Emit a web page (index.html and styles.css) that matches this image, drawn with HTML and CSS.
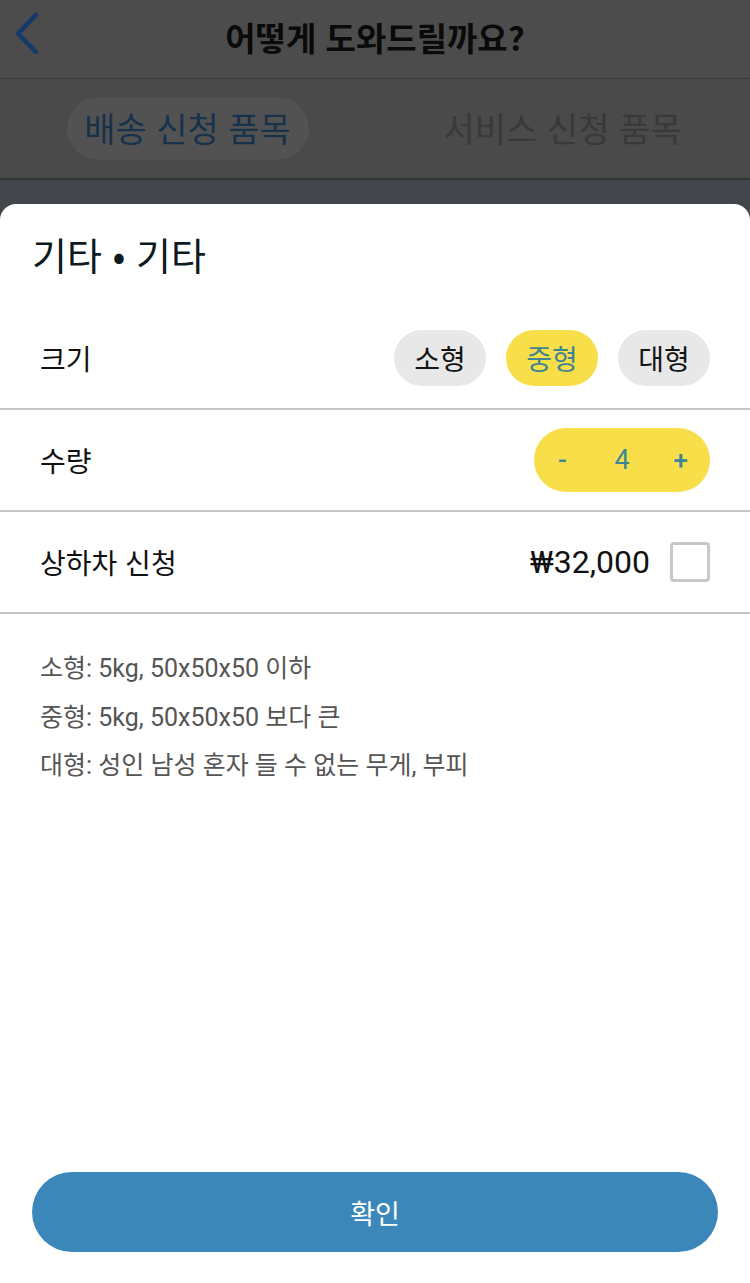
FILE: index.html
```html
<!DOCTYPE html>
<html lang="ko">
<head>
<meta charset="utf-8">
<title>어떻게 도와드릴까요?</title>
<link rel="stylesheet" href="styles.css">
</head>
<body>
<div class="screen">
  <header class="topbar">
    <svg class="back" width="30" height="46" viewBox="0 0 30 46" aria-hidden="true">
      <polyline points="22,4 4,22.5 22,41" fill="none" stroke="#143a69" stroke-width="4.5" stroke-linecap="round" stroke-linejoin="round"/>
    </svg>
    <h1 class="topbar-title">어떻게 도와드릴까요?</h1>
  </header>
  <nav class="tabs">
    <div class="tab"><span class="tab-pill">배송 신청 품목</span></div>
    <div class="tab"><span class="tab-label">서비스 신청 품목</span></div>
  </nav>
  <div class="gap"></div>
  <section class="sheet">
    <h2 class="sheet-title">기타 • 기타</h2>
    <div class="row">
      <span class="row-label">크기</span>
      <div class="chips">
        <span class="chip">소형</span>
        <span class="chip chip-on">중형</span>
        <span class="chip">대형</span>
      </div>
    </div>
    <div class="divider"></div>
    <div class="row">
      <span class="row-label">수량</span>
      <div class="stepper">
        <span class="step-btn">-</span>
        <span class="step-val">4</span>
        <span class="step-btn">+</span>
      </div>
    </div>
    <div class="divider"></div>
    <div class="row">
      <span class="row-label">상하차 신청</span>
      <div class="price-box">
        <span class="price">₩32,000</span>
        <span class="checkbox"></span>
      </div>
    </div>
    <div class="divider"></div>
    <div class="notes">
      <p>소형: 5kg, 50x50x50 이하</p>
      <p>중형: 5kg, 50x50x50 보다 큰</p>
      <p>대형: 성인 남성 혼자 들 수 없는 무게, 부피</p>
    </div>
    <div class="spacer"></div>
    <button class="confirm">확인</button>
  </section>
</div>
</body>
</html>
```
FILE: styles.css
```css
html, body {
  margin: 0;
  padding: 0;
}
body {
  width: 750px;
  height: 1283px;
  background: #43464a;
  font-family: "Noto Sans CJK KR", "Noto Sans", sans-serif;
  overflow: hidden;
}
.screen {
  display: flex;
  flex-direction: column;
  height: 1283px;
}
.topbar {
  height: 78px;
  background: #4c4c4c;
  border-bottom: 1px solid #3a3a3a;
  display: flex;
  align-items: center;
  justify-content: center;
  position: relative;
  flex-shrink: 0;
}
.back {
  position: absolute;
  left: 14px;
  top: 11px;
}
.topbar-title {
  margin: 0 0 5px;
  font-size: 33px;
  font-weight: 700;
  color: #0a0a0a;
}
.tabs {
  height: 99px;
  background: #4a4a4a;
  border-bottom: 2px solid #343434;
  display: grid;
  grid-template-columns: 1fr 1fr;
  flex-shrink: 0;
}
.tab {
  display: flex;
  align-items: center;
  justify-content: center;
}
.tab-pill {
  background: #525252;
  border-radius: 32px;
  height: 63px;
  width: 242px;
  display: flex;
  align-items: center;
  justify-content: center;
  font-size: 34px;
  color: #18324a;
  padding-bottom: 2px;
  box-sizing: border-box;
}
.tab-label {
  font-size: 34px;
  color: #393939;
  padding-bottom: 2px;
}
.gap {
  height: 24px;
  flex-shrink: 0;
}
.sheet {
  flex: 1;
  background: #ffffff;
  border-radius: 16px 16px 0 0;
  display: flex;
  flex-direction: column;
}
.sheet-title {
  margin: 0;
  height: 104px;
  box-sizing: border-box;
  padding: 26px 0 0 32px;
  font-size: 38px;
  line-height: 48px;
  font-weight: 400;
  color: #0d1a20;
}
.row {
  height: 100px;
  display: flex;
  align-items: center;
  justify-content: space-between;
  padding: 0 40px;
}
.row-label {
  font-size: 28px;
  color: #111111;
}
.chips {
  display: flex;
  gap: 20px;
}
.chip {
  width: 92px;
  height: 56px;
  border-radius: 28px;
  background: #e7e8e7;
  display: flex;
  align-items: center;
  justify-content: center;
  font-size: 28px;
  color: #141414;
}
.chip-on {
  background: #f8df4a;
  color: #3f8490;
}
.divider {
  height: 2px;
  background: #c6c6c6;
}
.stepper {
  width: 176px;
  height: 64px;
  border-radius: 32px;
  background: #f8df4a;
  display: flex;
  align-items: center;
  justify-content: space-between;
  padding: 0 22px 0 24px;
  box-sizing: border-box;
  color: #3d8699;
  font-family: Roboto, "Noto Sans", sans-serif;
}
.step-btn {
  font-size: 26px;
  font-weight: 500;
}
.step-val {
  font-size: 27px;
  margin-left: 4px;
}
.price-box {
  display: flex;
  align-items: center;
  gap: 20px;
}
.price {
  font-family: Roboto, "Noto Sans CJK KR", sans-serif;
  font-size: 32px;
  color: #111111;
}
.checkbox {
  width: 40px;
  height: 40px;
  box-sizing: border-box;
  border: 3px solid #c6c8ca;
  border-radius: 4px;
}
.notes {
  padding: 31px 40px 0;
}
.notes p {
  margin: 0;
  font-family: Roboto, "Noto Sans CJK KR", sans-serif;
  font-size: 25px;
  line-height: 48.5px;
  color: #555555;
}
.spacer {
  flex: 1;
}
.confirm {
  margin: 0 32px 31px;
  height: 80px;
  border: none;
  border-radius: 40px;
  background: #3c87ba;
  color: #ffffff;
  font-family: "Noto Sans CJK KR", "Noto Sans", sans-serif;
  font-size: 27px;
}
```
